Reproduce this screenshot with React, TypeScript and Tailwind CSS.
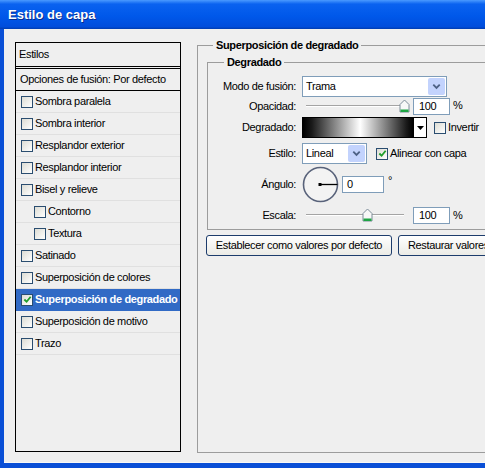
import React from 'react'

const layers = [
  { label: 'Sombra paralela' },
  { label: 'Sombra interior' },
  { label: 'Resplandor exterior' },
  { label: 'Resplandor interior' },
  { label: 'Bisel y relieve' },
  { label: 'Contorno', indent: true },
  { label: 'Textura', indent: true },
  { label: 'Satinado' },
  { label: 'Superposición de colores' },
  { label: 'Superposición de degradado', checked: true, active: true },
  { label: 'Superposición de motivo' },
  { label: 'Trazo' },
]

function Check({ checked }: { checked?: boolean }) {
  return (
    <span className="flex h-[12px] w-[12px] shrink-0 items-center justify-center border border-[#2a4d70] bg-linear-to-br from-[#dcdcd4] to-white">
      {checked && (
        <svg viewBox="0 0 10 10" className="h-[9px] w-[9px]">
          <path d="M1.5 5 L4 7.5 L8.5 2" fill="none" stroke="#1f9e2a" strokeWidth="2" />
        </svg>
      )}
    </span>
  )
}

function Chevron() {
  return (
    <svg viewBox="0 0 12 12" className="h-[11px] w-[11px]">
      <path d="M2.5 4 L6 7.5 L9.5 4" fill="none" stroke="#4d6185" strokeWidth="2" />
    </svg>
  )
}

function Select({ value, className }: { value: string; className: string }) {
  return (
    <div className={`flex h-[21px] shrink-0 items-center border border-[#7f9db9] bg-white pl-[3px] pr-[1px] ${className}`}>
      <span>{value}</span>
      <span className="ml-auto flex h-[17px] w-[17px] items-center justify-center rounded-[2px] bg-[#c3d3fd]">
        <Chevron />
      </span>
    </div>
  )
}

function Slider({ pos }: { pos: number }) {
  return (
    <div className="relative h-full w-[111px] shrink-0">
      <div className="absolute left-[4px] top-1/2 h-[2px] w-[98px] -translate-y-1/2 border-t border-[#a4a4a4] bg-white" />
      <svg
        width="11"
        height="14"
        viewBox="0 0 11 14"
        className="absolute top-1/2 -translate-y-1/2"
        style={{ left: pos - 5 }}
      >
        <path d="M1 5.5 L5.5 1 L10 5.5 V13 H1 Z" fill="#f8f8f8" stroke="#7d8c99" />
        <rect x="1.5" y="10.5" width="8" height="2.5" fill="#1fa544" />
      </svg>
    </div>
  )
}

function NumberBox({ value, className }: { value: string; className: string }) {
  return (
    <div className={`flex h-[17px] shrink-0 items-center border border-[#7f9db9] bg-white ${className}`}>
      {value}
    </div>
  )
}

function Label({ children }: { children: React.ReactNode }) {
  return <div className="w-[94px] shrink-0 pr-[6px] text-right">{children}</div>
}

export default function App() {
  return (
    <div className="flex h-[468px] w-[485px] flex-col overflow-hidden bg-[#0a4fd6] font-['Liberation_Sans',Arial,sans-serif] text-[11px] tracking-[-0.35px] text-black">
      {/* title bar */}
      <div className="flex h-[29px] shrink-0 items-center bg-[linear-gradient(to_bottom,#4a9aff_0%,#0a62f0_14%,#0058ea_55%,#004ddc_92%,#003cb0_100%)] pl-[8px] text-[13px] font-bold tracking-normal text-white [text-shadow:1px_1px_0_#0b2d8c]">
        Estilo de capa
      </div>

      <div className="mb-[5px] ml-[4px] flex flex-1 items-start gap-[16px] border-b border-[#f8f8f8] bg-[#efefef] pl-[11px] pt-[9px]">
        {/* styles list */}
        <div className="mt-[4px] flex h-[410px] w-[166px] shrink-0 flex-col border border-black">
          <div className="flex h-[23px] items-center pl-[3px]">Estilos</div>
          <div className="h-[3px] border-y border-black" />
          <div className="flex h-[22px] items-center border-b border-black pl-[4px]">Opciones de fusión: Por defecto</div>
          {layers.map((l) => (
            <div
              key={l.label}
              className={`flex h-[22px] items-center gap-[2px] border-b ${
                l.active ? 'border-[#316ac5] bg-[#316ac5] font-bold text-white' : 'border-[#e0e0e0]'
              } ${l.indent ? 'pl-[18px]' : 'pl-[5px]'}`}
            >
              <Check checked={l.checked} />
              <span>{l.label}</span>
            </div>
          ))}
        </div>

        {/* gradient overlay settings */}
        <fieldset className="h-[415px] w-[303px] shrink-0 border border-[#9c9c9c] pl-[9px] pt-[3px]">
          <legend className="ml-[6px] px-[3px] font-bold leading-[14px]">Superposición de degradado</legend>

          <fieldset className="w-[300px] border border-[#9c9c9c] pb-[6px] pt-[7px]">
            <legend className="ml-[16px] px-[3px] font-bold leading-[14px]">Degradado</legend>

            <div className="flex h-[21px] items-center">
              <Label>Modo de fusión:</Label>
              <Select value="Trama" className="w-[145px]" />
            </div>

            <div className="flex h-[18px] items-center">
              <Label>Opacidad:</Label>
              <Slider pos={102} />
              <NumberBox value="100" className="w-[37px] pl-[5px]" />
              <span className="ml-[3px] self-start">%</span>
            </div>

            <div className="mt-[2px] flex h-[21px] items-center">
              <Label>Degradado:</Label>
              <div className="flex h-[21px] shrink-0 border border-black">
                <div className="w-[110px] bg-[linear-gradient(to_right,#000_0%,#1a1a1a_8%,#fff_52%,#1a1a1a_94%,#000_100%)]" />
                <div className="flex w-[13px] items-center justify-center border-l border-black bg-white">
                  <svg width="7" height="4" viewBox="0 0 7 4">
                    <path d="M0 0 H7 L3.5 4 Z" fill="#000" />
                  </svg>
                </div>
              </div>
              <div className="ml-[7px] flex items-center gap-[2px]">
                <Check />
                <span>Invertir</span>
              </div>
            </div>

            <div className="mt-[5px] flex h-[21px] items-center">
              <Label>Estilo:</Label>
              <Select value="Lineal" className="w-[65px]" />
              <div className="ml-[9px] flex items-center gap-[2px]">
                <Check checked />
                <span>Alinear con capa</span>
              </div>
            </div>

            <div className="mt-[2px] flex h-[36px] items-center">
              <Label>Ángulo:</Label>
              <svg width="37" height="37" viewBox="0 0 37 37" className="shrink-0">
                <circle cx="18.5" cy="18.5" r="17" fill="#f3f3f3" stroke="#58627a" strokeWidth="1.6" />
                <line x1="18" y1="18.5" x2="35.5" y2="18.5" stroke="#000" strokeWidth="1.3" />
                <rect x="16.5" y="17" width="3" height="3" fill="#000" />
              </svg>
              <NumberBox value="0" className="ml-[3px] h-[15px] w-[42px] pl-[4px]" />
              <span className="ml-[4px] -mt-[8px]">°</span>
            </div>

            <div className="mt-[5px] flex h-[16px] items-center">
              <Label>Escala:</Label>
              <Slider pos={65} />
              <NumberBox value="100" className="w-[37px] pl-[5px]" />
              <span className="ml-[3px] self-start">%</span>
            </div>
          </fieldset>

          <div className="-ml-[1px] mt-[5px] flex gap-[6px]">
            <button className="h-[21px] w-[186px] shrink-0 rounded-[3px] border border-[#1d3c6c] bg-linear-to-b from-white to-[#ebebe6]">
              Establecer como valores por defecto
            </button>
            <button className="h-[21px] w-[170px] shrink-0 rounded-[3px] border border-[#1d3c6c] bg-linear-to-b from-white to-[#ebebe6] pl-[9px] text-left">
              Restaurar valores por defecto
            </button>
          </div>
        </fieldset>
      </div>
    </div>
  )
}
